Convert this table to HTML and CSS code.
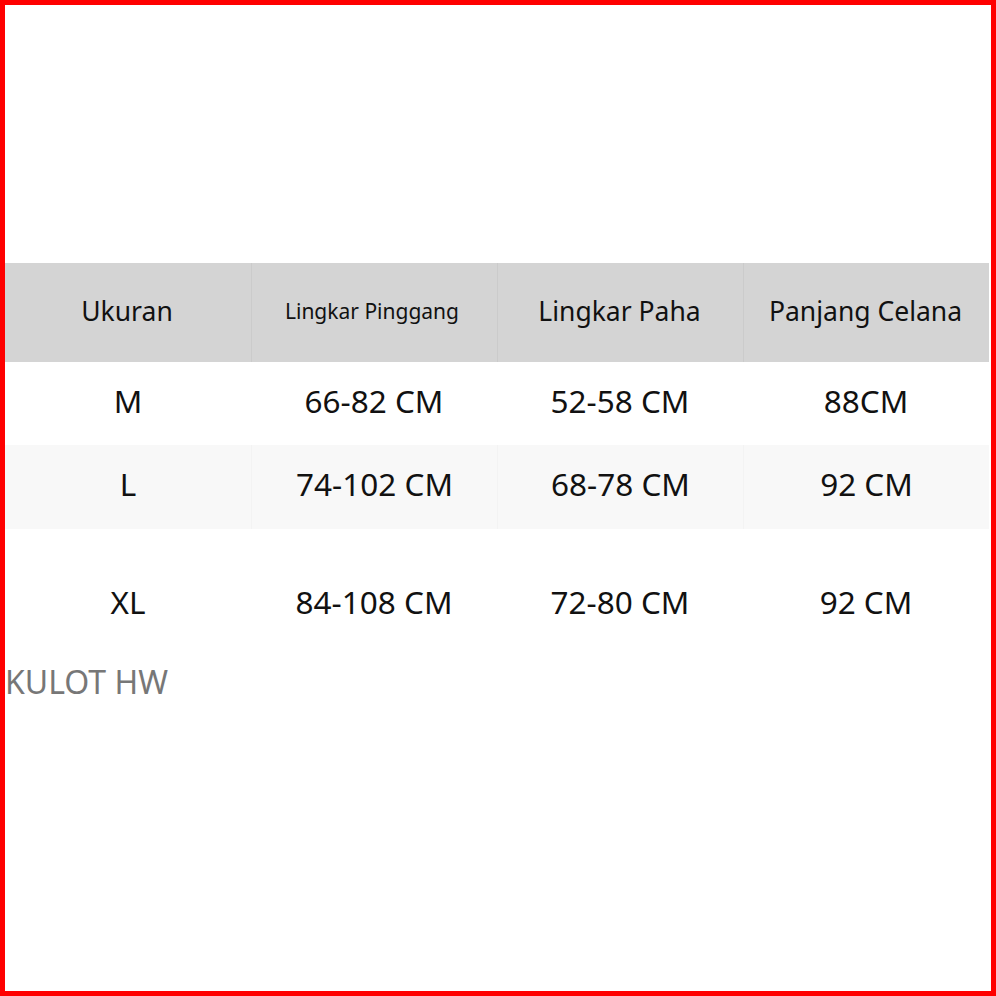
FILE: index.html
```html
<!DOCTYPE html>
<html>
<head>
<meta charset="utf-8">
<link rel="stylesheet" href="styles.css">
</head>
<body>
<div class="frame">
  <div class="table">
    <div class="row head">
      <div class="cell">Ukuran</div>
      <div class="cell small">Lingkar Pinggang</div>
      <div class="cell">Lingkar Paha</div>
      <div class="cell">Panjang Celana</div>
    </div>
    <div class="row body r-m">
      <div class="cell">M</div>
      <div class="cell">66-82 CM</div>
      <div class="cell">52-58 CM</div>
      <div class="cell">88CM</div>
    </div>
    <div class="row body r-l">
      <div class="cell">L</div>
      <div class="cell">74-102 CM</div>
      <div class="cell">68-78 CM</div>
      <div class="cell">92 CM</div>
    </div>
    <div class="row body r-xl">
      <div class="cell">XL</div>
      <div class="cell">84-108 CM</div>
      <div class="cell">72-80 CM</div>
      <div class="cell">92 CM</div>
    </div>
  </div>
  <div class="caption">KULOT HW</div>
</div>
</body>
</html>
```
FILE: styles.css
```css
html, body {
  margin: 0;
  padding: 0;
  background: #ffffff;
}
.frame {
  width: 996px;
  height: 996px;
  box-sizing: border-box;
  border: 5px solid #ff0000;
  padding-top: 258px;
  font-family: "Noto Sans", "Open Sans", sans-serif;
  color: #111111;
}
.table {
  width: 984px;
  display: flex;
  flex-direction: column;
}
.row {
  display: grid;
  grid-template-columns: repeat(4, 246px);
}
.cell {
  display: flex;
  align-items: center;
  justify-content: center;
  text-align: center;
  white-space: nowrap;
}
.head {
  background: #d4d4d4;
}
.head .cell {
  height: 99px;
  box-sizing: border-box;
  padding-bottom: 3px;
  padding-right: 2px;
  font-size: 26.5px;
  line-height: 36px;
}
.head .cell + .cell {
  border-left: 1px solid #cbcbcb;
}
.head .cell.small {
  font-size: 21px;
  padding-right: 5px;
}
.body .cell {
  font-size: 31.5px;
  line-height: 40px;
  box-sizing: border-box;
}
.r-m .cell {
  padding-top: 19px;
  padding-bottom: 24px;
}
.r-l {
  background: #f8f8f8;
}
.r-l .cell {
  padding-top: 19px;
  padding-bottom: 25px;
}
.r-l .cell + .cell {
  border-left: 1px solid #f3f3f3;
}
.r-xl .cell {
  padding-top: 53px;
  padding-bottom: 39px;
}
.caption {
  font-size: 32px;
  line-height: 41px;
  color: #777777;
}
```
